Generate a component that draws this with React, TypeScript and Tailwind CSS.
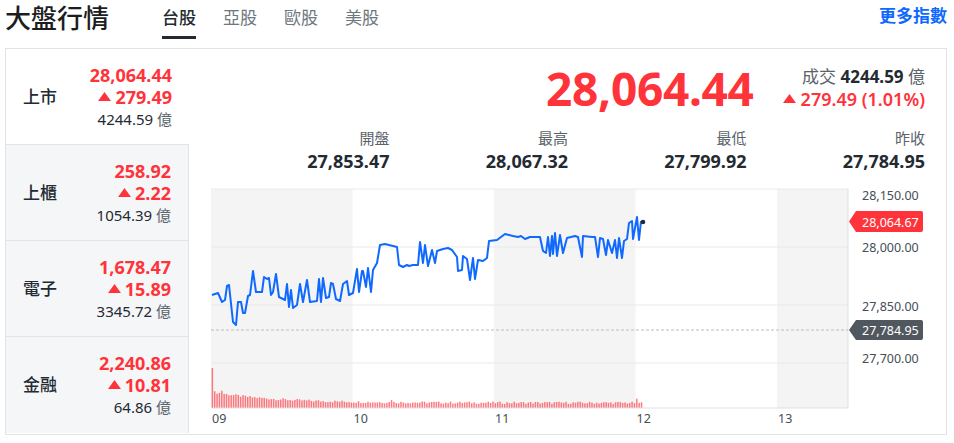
import React from 'react';

const RED = '#ff333a';

const markets = [
  { name: '上市', price: '28,064.44', chg: '279.49', vol: '4244.59', active: true },
  { name: '上櫃', price: '258.92', chg: '2.22', vol: '1054.39', active: false },
  { name: '電子', price: '1,678.47', chg: '15.89', vol: '3345.72', active: false },
  { name: '金融', price: '2,240.86', chg: '10.81', vol: '64.86', active: false },
];

const stats = [
  { label: '開盤', value: '27,853.47' },
  { label: '最高', value: '28,067.32' },
  { label: '最低', value: '27,799.92' },
  { label: '昨收', value: '27,784.95' },
];

const tabs = ['台股', '亞股', '歐股', '美股'];

// traced from the intraday line, page coords
const linePts =
  '212,295 218,293 222,302 225,300 227,286 229,285 233,322 236,325 238,302 241,302 243,313 245,313 248,296 250,295 253,271 256,292 262,292 264,277 267,279 269,278 271,295 273,292 276,274 279,297 285,300 287,284 289,307 291,290 293,308 297,305 300,284 303,302 307,280 310,302 317,301 319,279 321,302 323,278 326,298 329,297 331,283 333,284 336,299 340,301 343,284 347,281 349,295 353,293 357,269 359,292 362,271 363,271 366,287 368,268 371,292 373,270 377,263 380,245 385,244 397,247 399,265 403,267 407,265 409,266 413,265 418,265 420,242 423,263 425,245 428,266 432,250 435,263 437,251 443,249 448,248 452,250 457,257 458,271 462,270 463,256 467,259 470,280 473,258 475,279 478,260 483,261 487,258 489,241 497,240 505,234 513,236 518,237 521,236 525,239 530,237 540,237 543,251 546,253 548,237 550,256 552,236 553,254 555,233 557,256 560,235 563,253 567,238 575,236 578,237 582,257 583,236 592,237 595,237 598,257 600,238 603,239 606,255 608,240 612,253 615,240 617,258 619,238 622,258 624,241 627,239 629,223 632,221 633,239 637,217 639,240 641,221';

const bars = Array.from({ length: 183 }, (_, i) => {
  const noise = Math.sin(i * 12.9898) * 43758.5453;
  const r = noise - Math.floor(noise);
  let h = i === 0 ? 40 : 5.2 + 11 * Math.exp(-i / 25) + (r - 0.5) * 2.4;
  if (i === 4) h += 3;
  if (i === 76) h += 3;
  if (i === 180) h += 3;
  return { x: 211.6 + i * 2.358, h };
});

function Up({ size = 13 }: { size?: number }) {
  return (
    <svg width={size} height={size * 0.7} viewBox="0 0 13 9" className="shrink-0">
      <path d="M6.5 0 L13 9 H0 Z" fill={RED} />
    </svg>
  );
}

function Chart() {
  const hours = [
    { t: '09', x: 211 },
    { t: '10', x: 352.5 },
    { t: '11', x: 494 },
    { t: '12', x: 635.5 },
    { t: '13', x: 777 },
  ];
  const yLabels = [
    { t: '28,150.00', y: 195 },
    { t: '28,000.00', y: 247 },
    { t: '27,850.00', y: 306 },
    { t: '27,700.00', y: 358 },
  ];
  return (
    <svg width={714} height={252} viewBox="211 182 714 252" className="block">
      <rect x={211} y={189} width={141.5} height={219} fill="#f4f4f4" />
      <rect x={494} y={189} width={141.5} height={219} fill="#f4f4f4" />
      <rect x={777} y={189} width={71} height={219} fill="#f4f4f4" />
      {[189, 247, 305, 363].map((y) => (
        <line key={y} x1={211} x2={848} y1={y} y2={y} stroke="#e9e9e9" strokeWidth={1} />
      ))}
      {bars.map((b, i) => (
        <rect key={i} x={b.x} y={408 - b.h} width={1.5} height={b.h} fill="#ff4d55" opacity={0.75} />
      ))}
      <line x1={848} y1={189} x2={848} y2={408} stroke="#dcdfe3" />
      <line x1={211} y1={408} x2={848} y2={408} stroke="#dcdfe3" />
      <line x1={211} y1={330} x2={848} y2={330} stroke="#bdbdbd" strokeDasharray="3 2" />
      <polyline points={linePts} fill="none" stroke="#0f69ff" strokeWidth={2} strokeLinejoin="round" />
      <circle cx={643} cy={222} r={2.3} fill="#232a31" />
      {yLabels.map((l) => (
        <text key={l.t} x={862} y={l.y} fontSize={12.5} fill="#464e56" dominantBaseline="central">
          {l.t}
        </text>
      ))}
      {hours.map((h) => (
        <text key={h.t} x={h.x + 1} y={418} fontSize={12.5} fill="#464e56" dominantBaseline="central">
          {h.t}
        </text>
      ))}
      <path d="M849,221.5 L856,211 H921 Q923,211 923,213 V230 Q923,232 921,232 H856 Z" fill="#ff333a" />
      <text x={862} y={222} fontSize={12.5} fill="#fff" dominantBaseline="central">
        28,064.67
      </text>
      <path d="M849,330 L856,320 H921 Q923,320 923,322 V338 Q923,340 921,340 H856 Z" fill="#51575e" />
      <text x={862} y={330.5} fontSize={12.5} fill="#fff" dominantBaseline="central">
        27,784.95
      </text>
    </svg>
  );
}

export default function App() {
  return (
    <div className="w-[954px] h-[443px] overflow-hidden bg-white pl-[5px] pr-[7px] font-['Noto_Sans','Noto_Sans_CJK_TC',sans-serif] text-[#232a31]">
      {/* header */}
      <div className="flex items-start h-[48px]">
        <h1 className="mt-[3px] text-[26px] leading-[30px] font-medium text-[#1d1d1f]">大盤行情</h1>
        <nav className="flex ml-[53px] gap-[27px]">
          {tabs.map((t, i) => (
            <div
              key={t}
              className={
                i === 0
                  ? 'pt-[6px] pb-[6px] border-b-[3px] border-[#232a31] text-[17px] leading-[24px] font-medium text-[#232a31]'
                  : 'pt-[6px] pb-[6px] border-b-[3px] border-transparent text-[17px] leading-[24px] text-[#6e7780]'
              }
            >
              {t}
            </div>
          ))}
        </nav>
        <a className="ml-auto mt-[4px] text-[17px] leading-[24px] font-bold text-[#0f69ff]">更多指數</a>
      </div>

      {/* board */}
      <div className="flex border border-[#e0e4e9] h-[387px]">
        <div className="w-[183px] flex flex-col">
          {markets.map((m, i) => (
            <div
              key={m.name}
              className={
                'h-[96px] flex items-center justify-between pl-[17px] pr-[17px] ' +
                (m.active ? 'bg-white ' : 'bg-[#f5f6f8] border-r border-[#e0e4e9] ') +
                (i < 3 ? 'border-b border-b-[#e0e4e9]' : '')
              }
            >
              <span className="text-[17px] font-medium">{m.name}</span>
              <div className="flex flex-col items-end">
                <span className="text-[18px] leading-[22px] font-bold" style={{ color: RED }}>
                  {m.price}
                </span>
                <span className="flex items-center gap-[4px] text-[18px] leading-[22px] font-bold" style={{ color: RED }}>
                  <Up />
                  {m.chg}
                </span>
                <span className="text-[15px] leading-[22px] text-[#232a31]">
                  {m.vol} <span className="text-[#5b636a]">億</span>
                </span>
              </div>
            </div>
          ))}
        </div>

        <div className="flex-1 flex flex-col pl-[22px] pr-[21px]">
          <div className="h-[79px] flex items-center justify-end">
            <div className="text-[46px] leading-none font-bold tracking-[-0.3px]" style={{ color: RED }}>
              28,064.44
            </div>
            <div className="ml-[29px] flex flex-col items-end">
              <div className="text-[17px] leading-[22px]">
                <span className="text-[#5b636a]">成交 </span>
                <span className="font-bold">4244.59</span>
                <span className="text-[#5b636a]"> 億</span>
              </div>
              <div className="flex items-center gap-[5px] text-[18px] leading-[22px] font-semibold" style={{ color: RED }}>
                <Up />
                279.49 (1.01%)
              </div>
            </div>
          </div>
          <div className="grid grid-cols-4">
            {stats.map((s) => (
              <div key={s.label} className="flex flex-col items-end">
                <span className="text-[15px] leading-[22px] text-[#5b636a]">{s.label}</span>
                <span className="text-[18px] leading-[24px] font-bold">{s.value}</span>
              </div>
            ))}
          </div>
          <div className="mt-[9px]">
            <Chart />
          </div>
        </div>
      </div>
    </div>
  );
}
